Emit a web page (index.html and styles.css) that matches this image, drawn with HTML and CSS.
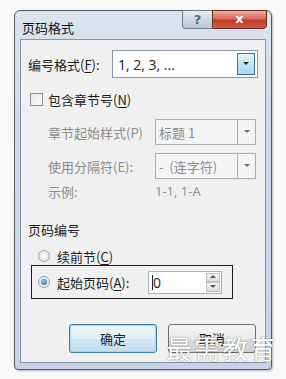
FILE: index.html
```html
<!DOCTYPE html>
<html lang="zh-CN">
<head>
    <meta charset="UTF-8">
    <meta name="viewport" content="width=device-width, initial-scale=1.0">
    <title>页码格式</title>
    <link rel="stylesheet" href="styles.css">
</head>
<body>
    <div class="dialog">
        <div class="titlebar">
            <span class="title">页码格式</span>
            <div class="caption-btns">
                <div class="cap-help">?</div>
                <div class="cap-close">x</div>
            </div>
        </div>

        <div class="content">
            <div class="row row-format">
                <label class="lbl-format">编号格式(<u>F</u>):</label>
                <div class="select select-main">
                    <span class="select-text">1, 2, 3, ...</span>
                    <span class="select-arrow"></span>
                </div>
            </div>

            <div class="row row-check">
                <span class="checkbox"></span>
                <span>包含章节号(<u>N</u>)</span>
            </div>

            <div class="row row-sub">
                <span class="lbl-sub">章节起始样式(P)</span>
                <div class="select select-off">
                    <span class="select-text">标题 1</span>
                    <span class="select-arrow"></span>
                </div>
            </div>
            <div class="row row-sub row-sub2">
                <span class="lbl-sub">使用分隔符(E):</span>
                <div class="select select-off">
                    <span class="select-text">-&nbsp;&nbsp;(连字符)</span>
                    <span class="select-arrow"></span>
                </div>
            </div>
            <div class="row row-example">
                <span class="lbl-sub">示例:</span>
                <span class="example-val">1-1, 1-A</span>
            </div>

            <div class="section">页码编号</div>

            <div class="row row-radio">
                <span class="radio"></span>
                <span>续前节(<u>C</u>)</span>
            </div>
            <div class="row row-radio row-start">
                <span class="radio checked"></span>
                <span class="lbl-start">起始页码(<u>A</u>):</span>
                <div class="spin">
                    <span class="spin-text"><i class="caret"></i>0</span>
                    <div class="spin-btns">
                        <span class="spin-up"></span>
                        <span class="spin-down"></span>
                    </div>
                </div>
            </div>

            <div class="row row-buttons">
                <button class="btn btn-default">确定</button>
                <button class="btn">取消</button>
            </div>
        </div>
    </div>

    <div class="watermark">最需教育</div>
</body>
</html>
```

FILE: styles.css
```css
* {
    margin: 0;
    padding: 0;
    box-sizing: border-box;
}

body {
    background: #f9f9f9;
    font-family: "Noto Sans CJK SC", "Noto Sans", sans-serif;
    font-size: 13px;
    color: #1c1c1c;
    width: 286px;
    height: 379px;
    overflow: hidden;
    position: relative;
    padding: 10px 0 0 14px;
}

u {
    text-decoration: underline;
    text-underline-offset: 2px;
}

.dialog {
    width: 258px;
    height: 360px;
    border: 1px solid #4f5863;
    border-radius: 6px 6px 4px 4px;
    background: linear-gradient(180deg, #d9e4f0 0%, #cddaea 30%, #c6d5e6 100%);
    box-shadow: 1px 1px 2px rgba(0, 0, 0, 0.25);
    display: flex;
    flex-direction: column;
}

.titlebar {
    height: 28px;
    display: flex;
    justify-content: space-between;
    align-items: flex-start;
    padding-left: 7px;
}

.title {
    padding-top: 6px;
    line-height: 22px;
    font-size: 13px;
    color: #111;
}

.caption-btns {
    display: flex;
    margin-right: 4px;
    margin-top: -1px;
    height: 19px;
}

.cap-help {
    width: 30px;
    border: 1px solid #6e7b89;
    border-right: none;
    border-radius: 0 0 0 4px;
    background: linear-gradient(180deg, #e6ecf2 0%, #cfd8e2 50%, #bcc7d3 100%);
    color: #5b6774;
    font-family: "DejaVu Sans", sans-serif;
    font-weight: bold;
    font-size: 13px;
    text-align: center;
    line-height: 17px;
}

.cap-close {
    width: 55px;
    border: 1px solid #6d2a22;
    border-radius: 0 0 4px 0;
    background: linear-gradient(180deg, #eab1a8 0%, #d7695a 45%, #c23a28 55%, #d25a44 100%);
    color: #fff;
    font-family: "DejaVu Sans", sans-serif;
    font-weight: bold;
    font-size: 13px;
    text-align: center;
    line-height: 16px;
}

.content {
    flex: 1;
    margin: 0 5px 6px 5px;
    border: 1px solid #8795a4;
    background: #f0f0f0;
    padding: 10px 0 0 7px;
    display: flex;
    flex-direction: column;
}

.row {
    display: flex;
    align-items: center;
}

.row-format {
    height: 28px;
}

.lbl-format {
    width: 84px;
}

.select {
    display: flex;
    align-items: stretch;
    background: #fff;
    border: 1px solid #8a98a8;
}

.select-main {
    width: 146px;
    height: 28px;
}

.select-text {
    flex: 1;
    padding-left: 5px;
    display: flex;
    align-items: center;
    white-space: nowrap;
    overflow: hidden;
}

.select-main .select-text {
    font-family: "Open Sans", "Noto Sans", sans-serif;
    font-size: 14px;
    color: #222;
}

.select-arrow {
    width: 18px;
    position: relative;
    border-left: 1px solid #8a98a8;
}

.select-main .select-arrow {
    margin: 2px 2px 2px 0;
    border: 1px solid #3b6e96;
    background: linear-gradient(180deg, #e4f3fc 0%, #c4e4f7 50%, #a9d8f3 100%);
}

.select-arrow::after {
    content: "";
    position: absolute;
    left: 50%;
    top: 50%;
    margin: -2px 0 0 -3px;
    border-left: 3px solid transparent;
    border-right: 3px solid transparent;
    border-top: 3px solid #222;
}

.row-check {
    margin-top: 14px;
    height: 14px;
    padding-left: 2px;
}

.checkbox {
    width: 13px;
    height: 13px;
    border: 1px solid #8f8f8f;
    background: linear-gradient(135deg, #e6e6e6, #fdfdfd);
    margin-right: 5px;
}

.row-sub {
    margin-top: 13px;
    height: 26px;
    padding-left: 20px;
}

.row-sub2 {
    margin-top: 8px;
}

.lbl-sub {
    width: 107px;
    color: #8c8c8c;
    white-space: nowrap;
}

.select-off {
    width: 101px;
    height: 26px;
    background: #f4f4f4;
    border-color: #adadad;
}

.select-off .select-text {
    color: #8c8c8c;
    padding-left: 3px;
}

.select-off .select-arrow {
    border-left-color: #adadad;
}

.select-off .select-arrow::after {
    border-top-color: #6d6d6d;
}

.row-example {
    margin-top: 3px;
    height: 18px;
    padding-left: 20px;
}

.example-val {
    color: #8c8c8c;
    font-family: "Open Sans", "Noto Sans", sans-serif;
}

.section {
    margin-top: 21px;
    line-height: 18px;
}

.row-radio {
    margin-top: 9px;
    height: 16px;
    padding-left: 10px;
}

.radio {
    width: 12px;
    height: 12px;
    border-radius: 50%;
    border: 1px solid #9aa4ae;
    background: radial-gradient(circle, #fafafa 0%, #e2e2e2 100%);
    margin-right: 7px;
    position: relative;
}

.radio.checked::after {
    content: "";
    position: absolute;
    left: 2px;
    top: 2px;
    width: 6px;
    height: 6px;
    border-radius: 50%;
    background: radial-gradient(circle at 40% 40%, #8cc6ee, #1f5f9e);
}

.row-start {
    margin-top: 1px;
    margin-left: 3px;
    margin-right: 32px;
    height: 34px;
    border: 1.5px solid #1e1e1e;
    padding-left: 6px;
}

.lbl-start {
    width: 91px;
}

.spin {
    display: flex;
    width: 74px;
    height: 23px;
    background: #fff;
    border: 1px solid #a9b3bd;
}

.spin-text {
    flex: 1;
    display: flex;
    align-items: center;
    padding-left: 3px;
    font-family: "Open Sans", "Noto Sans", sans-serif;
    font-size: 14px;
    color: #222;
}

.caret {
    display: inline-block;
    width: 1px;
    height: 15px;
    background: #222;
}

.spin-btns {
    width: 14px;
    display: flex;
    flex-direction: column;
    margin: 1px;
}

.spin-up,
.spin-down {
    flex: 1;
    position: relative;
    border: 1px solid #b8c0c8;
    background: linear-gradient(180deg, #f6f6f6, #dcdcdc);
}

.spin-up::after,
.spin-down::after {
    content: "";
    position: absolute;
    left: 50%;
    top: 50%;
    margin: -2px 0 0 -3px;
    border-left: 3px solid transparent;
    border-right: 3px solid transparent;
}

.spin-up::after {
    border-bottom: 3px solid #555;
}

.spin-down::after {
    border-top: 3px solid #555;
}

.row-buttons {
    margin-top: 25px;
    justify-content: flex-end;
    gap: 11px;
    padding-right: 9px;
}

.btn {
    width: 88px;
    height: 29px;
    font-family: "Noto Sans CJK SC", sans-serif;
    font-size: 13px;
    color: #1c1c1c;
    border: 1px solid #707070;
    border-radius: 3px;
    background: linear-gradient(180deg, #f4f4f4 0%, #ebebeb 50%, #dddddd 51%, #cfcfcf 100%);
}

.btn-default {
    border-color: #3c7fb1;
    box-shadow: inset 0 0 0 1px #9ed7f3;
    background: linear-gradient(180deg, #eef6fb 0%, #e1eef6 50%, #d1e6f3 51%, #c3dcec 100%);
}

/* watermark laid over the dialog */
.watermark {
    position: absolute;
    left: 166px;
    top: 329px;
    font-family: "Noto Sans CJK SC", sans-serif;
    font-size: 26px;
    letter-spacing: 2px;
    color: #fff;
    white-space: nowrap;
    text-shadow: 0 0 1px rgba(0, 0, 0, 0.45), 0 0 2px rgba(0, 0, 0, 0.2);
}
```
